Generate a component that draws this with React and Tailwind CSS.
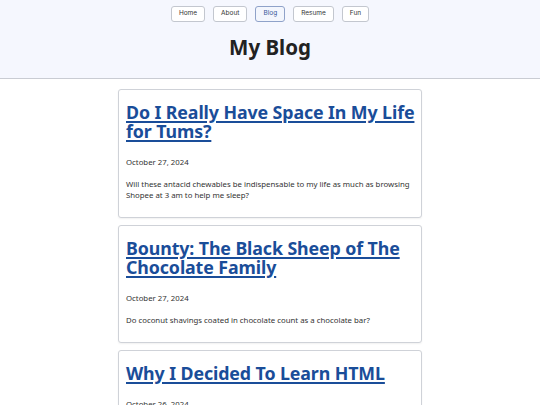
import React from 'react';

const navItems = [
  { label: 'Home' },
  { label: 'About' },
  { label: 'Blog', active: true },
  { label: 'Resume' },
  { label: 'Fun' }
];

const posts = [
  {
    title: 'Do I Really Have Space In My Life for Tums?',
    date: 'October 27, 2024',
    summary:
      'Will these antacid chewables be indispensable to my life as much as browsing Shopee at 3 am to help me sleep?'
  },
  {
    title: 'Bounty: The Black Sheep of The Chocolate Family',
    date: 'October 27, 2024',
    summary: 'Do coconut shavings coated in chocolate count as a chocolate bar?'
  },
  {
    title: 'Why I Decided To Learn HTML',
    date: 'October 26, 2024',
    summary: 'A few notes on where this little site started.'
  }
];

const PostCard = ({ title, date, summary }) => (
  <article className="rounded-[3px] border border-[#cfd2d8] bg-white px-[7px] pb-[16px] pt-[13px] shadow-[0_1px_2px_rgba(0,0,0,0.06)]">
    <h2 className="-mr-[6px] text-[17.8px] font-bold leading-[19px] tracking-[-0.1px] text-[#1a4d99]">
      <a href="#" className="underline decoration-[1.5px] underline-offset-[2px]">
        {title}
      </a>
    </h2>
    <p className="mt-[16px] text-[7.8px] leading-[11px] text-[#333]">{date}</p>
    <p className="mt-[11px] text-[7.8px] leading-[11px] text-[#333]">{summary}</p>
  </article>
);

const App = () => {
  return (
    <div className="min-h-[405px] bg-white font-['Noto_Sans',sans-serif] text-[#222]">
      <header className="border-b border-[#c9ccd3] bg-[#f5f7fe] pb-[15px] pt-[6px]">
        <nav className="flex justify-center gap-[8px] font-['Inter',sans-serif]">
          {navItems.map((item) => (
            <a
              key={item.label}
              href="#"
              className={
                item.active
                  ? 'flex h-[16px] items-center rounded-[3px] border border-[#8fa2c9] bg-[#f3f6fd] px-[7px] text-[6.5px] text-[#3a5a9a]'
                  : 'flex h-[16px] items-center rounded-[3px] border border-[#c3c7cf] bg-white px-[7px] text-[6.5px] text-[#333]'
              }
            >
              {item.label}
            </a>
          ))}
        </nav>
        <h1 className="mt-[9px] text-center text-[20.5px] font-bold leading-[32px] text-[#222]">
          My Blog
        </h1>
      </header>
      <main className="mx-auto flex w-[304px] flex-col gap-[7px] pt-[10px]">
        {posts.map((post) => (
          <PostCard key={post.title} {...post} />
        ))}
      </main>
    </div>
  );
};

export default App;
